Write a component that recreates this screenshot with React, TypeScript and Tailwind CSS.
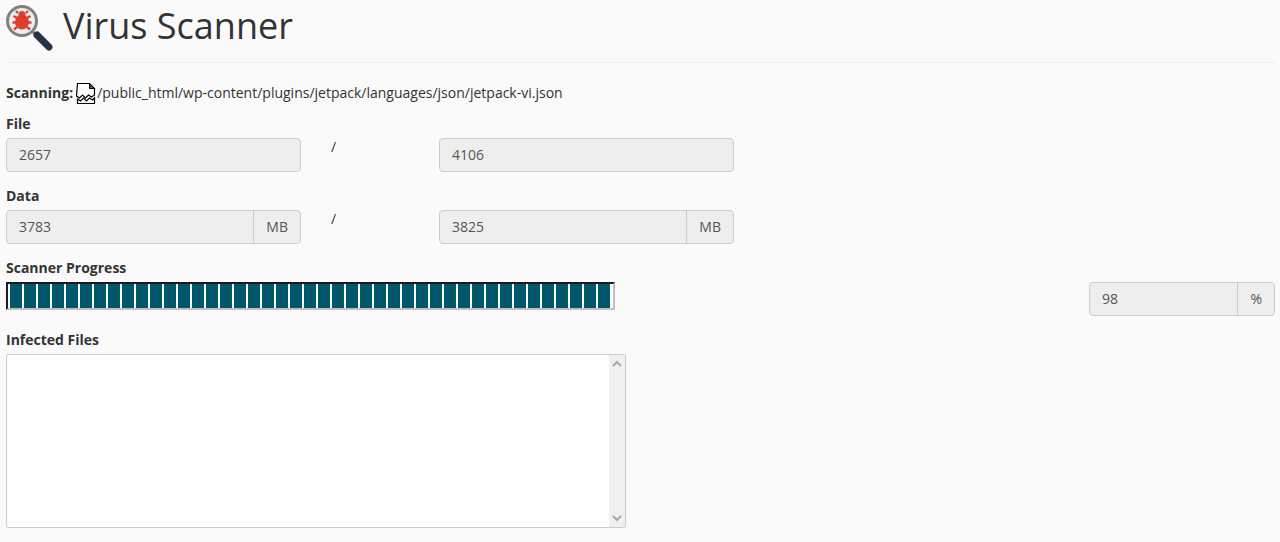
import React from 'react';

const segments = Array.from({ length: 43 }, (_, i) => i);

const BugIcon = () => (
  <svg width="50" height="50" viewBox="0 0 50 50" className="shrink-0">
    <circle cx="16" cy="17" r="14.5" fill="#ededed" stroke="#808080" strokeWidth="3" />
    <path d="M26.5 27.5l4 4" stroke="#808080" strokeWidth="3" />
    <path d="M31 31l12 12" stroke="#233544" strokeWidth="7" strokeLinecap="round" />
    <g fill="#d9412d">
      <ellipse cx="16" cy="18" rx="7" ry="7.5" />
      <circle cx="16" cy="10.5" r="3.5" />
    </g>
    <g stroke="#d9412d" strokeWidth="2.4" fill="none">
      <path d="M12 9l-2-2M20 9l2-2M11 14l-3.5-2M21 14l3.5-2M10 18.5H6.5M22 18.5h3.5M11 23l-3 2.5M21 23l3 2.5" />
    </g>
  </svg>
);

const BrokenFile = () => (
  <svg width="20" height="22" viewBox="0 0 20 22" className="shrink-0">
    <path d="M1.5 1.5h12l5 5v6.5l-3 2-3-2-3 3-3-3-3 3-3-2z" fill="#fff" stroke="#000" strokeWidth="1.2" />
    <path d="M13.5 1.5v5h5z" fill="#555" stroke="#000" />
    <path d="M1.5 17l3 2 3-3 3 3 3-3 3 2 2-2v5.5h-17z" fill="#fff" stroke="#000" strokeWidth="1.2" />
  </svg>
);

const Field = ({ value, unit, width = 'w-[295px]' }: { value: string; unit?: string; width?: string }) => (
  <div className={`flex h-[34px] ${width} rounded border border-[#ccc] bg-[#eee] text-[14px] leading-5 text-[#555]`}>
    <div className="flex flex-1 items-center px-3">{value}</div>
    {unit && <div className="flex items-center border-l border-[#ccc] px-3">{unit}</div>}
  </div>
);

const Label = ({ children }: { children: React.ReactNode }) => (
  <div className="h-5 text-[14px] font-bold leading-5 text-[#333]">{children}</div>
);

export default function App() {
  return (
    <div className="h-[542px] overflow-hidden bg-[#fafafa] pl-[6px] pr-[5px] font-['Open_Sans',sans-serif] text-[14px] leading-5 text-[#333]">
      <div className="flex h-[63px] items-start gap-[7px] border-b border-[#eee]">
        <div className="pt-[4px]">
          <BugIcon />
        </div>
        <h1 className="pt-[6px] text-[36px] font-normal leading-[40px] text-[#333]">Virus Scanner</h1>
      </div>

      <div className="mt-[20px] flex h-5 items-center">
        <span className="font-bold">Scanning:</span>
        <span className="ml-[3px]"><BrokenFile /></span>
        <span className="ml-px">/public_html/wp-content/plugins/jetpack/languages/json/jetpack-vi.json</span>
      </div>

      <div className="mt-[11px]">
        <Label>File</Label>
        <div className="mt-[4px] flex">
          <Field value="2657" />
          <div className="w-[138px] pl-[30px] leading-[18px]">/</div>
          <Field value="4106" />
        </div>
      </div>

      <div className="mt-[14px]">
        <Label>Data</Label>
        <div className="mt-[4px] flex">
          <Field value="3783" unit="MB" />
          <div className="w-[138px] pl-[30px] leading-[18px]">/</div>
          <Field value="3825" unit="MB" />
        </div>
      </div>

      <div className="mt-[14px]">
        <Label>Scanner Progress</Label>
        <div className="mt-[4px] flex items-start justify-between">
          <div className="flex h-[28px] w-[609px] gap-[2px] border-2 border-t-[#1c1c1c] border-l-[#1c1c1c] border-r-[#c0c0c0] border-b-[#c0c0c0] bg-white pl-[2px]">
            {segments.map((i) => (
              <div key={i} className="h-full w-[12px] bg-[#00566b]" />
            ))}
          </div>
          <Field value="98" unit="%" width="w-[186px]" />
        </div>
      </div>

      <div className="mt-[14px]">
        <Label>Infected Files</Label>
        <div className="mt-[4px] flex h-[174px] w-[620px] rounded-[2px] border border-[#ccc] bg-white">
          <div className="flex-1" />
          <div className="flex w-[16px] flex-col items-center justify-between bg-[#f0f0f0] py-[5px]">
            <svg width="10" height="8" viewBox="0 0 10 8"><path d="M1 6l4-4 4 4" fill="none" stroke="#a8a8a8" strokeWidth="2" /></svg>
            <svg width="10" height="8" viewBox="0 0 10 8"><path d="M1 2l4 4 4-4" fill="none" stroke="#a8a8a8" strokeWidth="2" /></svg>
          </div>
        </div>
      </div>
    </div>
  );
}
